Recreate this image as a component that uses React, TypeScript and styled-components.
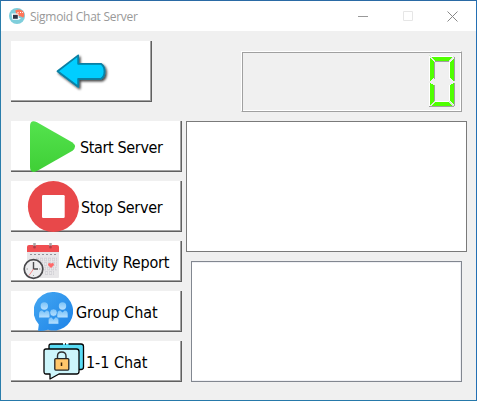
import React from "react";
import styled, { createGlobalStyle } from "styled-components";

const GlobalStyle = createGlobalStyle`
  * { box-sizing: border-box; }
  body { margin: 0; background: #f0f0f0; overflow: hidden; }
  svg { display: block; flex: none; }
`;

const Window = styled.main`
  width: 477px;
  height: 401px;
  border: 1px solid #1f6fae;
  border-color: #2a6aa5 #2470b4 #2679aa #2a7dab;
  background: #f0f0f0;
  display: flex;
  flex-direction: column;
`;

const TitleBar = styled.header`
  height: 30px;
  flex: none;
  background: #fff;
  display: flex;
  align-items: center;
  padding: 0 1px 0 8px;
`;

const Title = styled.h1`
  margin: 0 auto 0 5px;
  padding-top: 1px;
  font: 400 12px/16px "Open Sans", "Noto Sans", sans-serif;
  letter-spacing: -0.27px;
  color: #999;
  white-space: nowrap;
`;

const WindowControl = styled.button`
  width: 45px;
  height: 30px;
  padding: 0;
  border: 0;
  background: none;
  display: grid;
  place-items: center;
`;

const TopRow = styled.div`
  display: flex;
  padding: 10px 14px 0 10px;
  height: 90px;
  flex: none;
  justify-content: space-between;
`;

const RaisedButton = styled.button<{ $height: number; $inset?: number; $width?: number }>`
  width: ${(p) => p.$width ?? 171}px;
  height: ${(p) => p.$height}px;
  flex: none;
  border: 0;
  padding: 0 0 0 ${(p) => p.$inset ?? 0}px;
  background: #fff;
  box-shadow: inset -1px -1px #606060, inset -2px -2px #a3a3a3;
  display: flex;
  align-items: center;
`;

const Label = styled.span<{ $gap: number; $spacing: number }>`
  margin-left: ${(p) => p.$gap}px;
  padding-top: 2px;
  font: 400 16px/20px "DejaVu Sans Condensed", "DejaVu Sans", sans-serif;
  font-stretch: condensed;
  letter-spacing: ${(p) => p.$spacing}px;
  color: #000;
  white-space: nowrap;
`;

const Lcd = styled.div`
  width: 221px;
  height: 61px;
  margin-top: 10px;
  border: 1px solid;
  border-color: #fff #a0a0a0 #a0a0a0 #fff;
  box-shadow: inset 1px 1px #a0a0a0, inset -1px -1px #fff;
  display: flex;
  justify-content: flex-end;
  padding: 3px 6px 0 0;
`;

const Columns = styled.div`
  display: flex;
  gap: 4px;
  padding-left: 10px;
`;

const Actions = styled.nav`
  display: flex;
  flex-direction: column;
  gap: 9px;
`;

const Outputs = styled.section`
  display: flex;
  flex-direction: column;
  gap: 9px;
`;

const ClientList = styled.div`
  width: 281px;
  height: 131px;
  background: #fff;
  border: 1px solid #7a7a7a;
`;

const LogView = styled.div`
  width: 271px;
  height: 121px;
  margin-left: 5px;
  background: #fff;
  border: 1px solid #828790;
  box-shadow: inset -1px 1px #eff0f4, inset 0 -1px #eff0f4;
`;

const AppIcon = () => (
  <svg width="16" height="16" viewBox="0 0 16 16">
    <circle cx="8" cy="8" r="8" fill="#7fcedb" />
    <path d="M6.3 2.5Q11 0 14 3.2Q16.5 6 14.2 9.8Q12 7.8 9 8Q6.5 6 6.3 2.5Z" fill="#ff7659" />
    <path d="M8.5 4.5h1M11 4.5h1M13.2 4.5h.8" stroke="#fff" />
    <path d="M2.5 5.5h6.8l.5 4.5H12l-2 1.7H3.5Z" fill="#fff" />
    <path d="M4 6.8h4.8v4H4Z" fill="#303747" />
  </svg>
);

const ArrowIcon = () => (
  <svg width="58" height="44" viewBox="0 0 58 44">
    <defs>
      <filter id="arrow-shadow" x="-20%" y="-20%" width="150%" height="150%">
        <feDropShadow dx="1.5" dy="1.7" stdDeviation="1" floodColor="#000" floodOpacity=".75" />
      </filter>
    </defs>
    <path d="M4.5 21.2 25.2 5.4V13.8H48Q51.5 16 51.5 21.4T48 28.8H25.2V36.8Z" fill="#00ceff" stroke="#087fa3" strokeWidth="1.8" strokeLinejoin="round" filter="url(#arrow-shadow)" />
  </svg>
);

const PlayIcon = () => (
  <svg width="52" height="51" viewBox="0 0 52 51">
    <defs>
      <linearGradient id="play" x1="0" y1="0" x2="0" y2="1">
        <stop stopColor="#54e34e" />
        <stop offset="1" stopColor="#3fcf36" />
      </linearGradient>
    </defs>
    <path d="M3 5C3 0 6-.8 10 1.3L45.5 21.5Q50.5 25.5 45.5 29.8L10 50Q3 53 3 46Z" fill="url(#play)" />
  </svg>
);

const StopIcon = () => (
  <svg width="52" height="51" viewBox="0 0 52 51">
    <circle cx="26.4" cy="25.5" r="25.5" fill="#e8484a" />
    <rect x="15" y="14" width="22.7" height="23" rx="1.2" fill="#fff" />
  </svg>
);

const ReportIcon = () => (
  <svg width="38" height="37" viewBox="0 0 38 37">
    <rect x="4" y="4" width="32" height="31" rx="1" fill="#e7e6e8" />
    <path d="M4 9V4Q4 2 6 2H34Q36 2 36 4V9Z" fill="#f04f52" />
    <path d="M11.5 0V5M27.5 0V5" stroke="#aaa" strokeWidth="2.5" />
    <circle cx="11.5" cy="4" r="1.5" fill="#b83842" />
    <circle cx="27.5" cy="4" r="1.5" fill="#b83842" />
    <path d="M7 11.5H34" stroke="#92929a" strokeDasharray="2 2" />
    <path d="M13 16.5H34M13 21H34M20 25.5H34M22 30H31" stroke="#cdccd1" strokeWidth="3.4" strokeDasharray="3 1" />
    <path d="M13 16.5H34M13 21H34M20 25.5H34M22 30H31" stroke="#e9e8ea" strokeWidth="1.8" strokeDasharray="1.8 2.2" strokeDashoffset="-.6" />
    <path d="M28 25l-3-3Q25 19 28 20.5Q31 19 31 22Z" fill="#ff6869" />
    <circle cx="10.5" cy="26" r="9.3" fill="#ededef" stroke="#49494c" strokeWidth="1.7" />
    <path d="M10.5 19V26H15" fill="none" stroke="#4b4b4e" strokeWidth="1.4" />
    <path d="M10.5 26 6 32.5" stroke="#f78b8b" />
    <path d="M3.5 26H5M10.5 32V33M16 26H17.5" stroke="#999" />
  </svg>
);

const Person = () => (
  <>
    <circle cx="0" cy="-5.2" r="3.7" />
    <path d="M-5.2 6.3V2.8Q-5.2-.7-2.2-.7L0 1.4 2.2-.7Q5.2-.7 5.2 2.8V6.3Z" />
  </>
);

const GroupIcon = () => (
  <svg width="39" height="39" viewBox="0 0 39 39">
    <defs>
      <linearGradient id="bubble" x1="0" y1="0" x2="1" y2="1">
        <stop stopColor="#45a8f2" />
        <stop offset="1" stopColor="#1c82e7" />
      </linearGradient>
      <linearGradient id="people" x1="0" y1="0" x2="0" y2="1">
        <stop stopColor="#7cc3f8" />
        <stop offset="1" stopColor="#b7e0ff" />
      </linearGradient>
    </defs>
    <path d="M19.3 0A19.3 19.3 0 1 1 14 37.7Q9 39.2 4 38.8L4.8 32.5A19.3 19.3 0 0 1 19.3 0Z" fill="url(#bubble)" />
    <g fill="url(#people)">
      <g transform="translate(10.3 19.2)"><Person /></g>
      <g transform="translate(28.5 19.2)"><Person /></g>
      <g transform="translate(19.5 25.8)" stroke="#2f94ed" strokeWidth=".6"><Person /></g>
    </g>
  </svg>
);

const PrivateIcon = () => (
  <svg width="42" height="38" viewBox="0 0 42 38" strokeLinejoin="round">
    <path d="M6 6V3Q6 1 8 1H38Q40.5 1 40.5 3.5V24Q40.5 26.5 38 26.5H35V6Z" fill="#5bdcf5" />
    <path d="M6 6V3Q6 1 8 1H20M22 1H23M25.5 1H38Q40.5 1 40.5 3.5V24Q40.5 26.5 38 26.5H36" fill="none" stroke="#050505" strokeWidth="1.3" />
    <path d="M3 6H33.5Q36 6 36 8.5V28.5Q36 31 33.5 31H16L7 36V31H3Q1 31 1 28.5V8Q1 6 3 6Z" fill="#cdf6fc" stroke="#050505" strokeWidth="1.3" />
    <path d="M14.5 16V13Q14.5 9 18.7 9T23 13V16" fill="none" stroke="#303030" strokeWidth="1.4" />
    <rect x="11.8" y="15.6" width="14" height="11.5" rx="1" fill="#ffc76b" stroke="#252525" strokeWidth="1.3" />
    <path d="M18.5 19.5V23" stroke="#3b2508" strokeWidth="1.5" />
  </svg>
);

const ZeroDigit = () => (
  <svg width="26" height="54" viewBox="0 0 26 54" shapeRendering="crispEdges">
    <g fill="#50ff00">
      <path d="M2 2H24L20 6H6Z" />
      <path d="M1 3 5 7V23L1 26Z" />
      <path d="M25 3V26L21 23V7Z" />
      <path d="M1 28 5 30V46L1 50Z" />
      <path d="M21 30 25 28V50L21 46Z" />
      <path d="M6 47H20L24 51H2Z" />
    </g>
    <path d="M.5 51V28M.5 26V1.5H25M5 46.5H20M20.5 24V7M20.5 46V30" fill="none" stroke="#fff" />
    <path d="M.5.5 6 6M25 1 20 6M1 51.5 6 46.5M25 51.5 20 46.5" stroke="#d8e8d0" />
    <path d="M25.5 2V26M25.5 28V51M5.5 7V24M5.5 30V46M6 6.5H20M0 51.5H25" stroke="#a0a0a0" fill="none" />
  </svg>
);

const actions = [
  { label: "Start Server", icon: <PlayIcon />, height: 51, inset: 16, gap: 1, spacing: -0.36 },
  { label: "Stop Server", icon: <StopIcon />, height: 51, inset: 16, gap: 2, spacing: -0.28 },
  { label: "Activity Report", icon: <ReportIcon />, height: 41, inset: 12, gap: 5, spacing: -0.18 },
  { label: "Group Chat", icon: <GroupIcon />, height: 41, inset: 23, gap: 3, spacing: -0.04 },
  { label: "1-1 Chat", icon: <PrivateIcon />, height: 41, inset: 32, gap: 1, spacing: -0.05 },
];

export default function App() {
  return (
    <>
      <GlobalStyle />
      <Window>
        <TitleBar>
          <AppIcon />
          <Title>Sigmoid Chat Server</Title>
          <WindowControl aria-label="Minimize">
            <svg width="10" height="10"><path d="M0 5.5H10" stroke="#999" /></svg>
          </WindowControl>
          <WindowControl aria-label="Maximize">
            <svg width="10" height="10"><path d="M.5.5H9.5V9.5H.5Z" fill="none" stroke="#e6e6e6" /></svg>
          </WindowControl>
          <WindowControl aria-label="Close">
            <svg width="11" height="11"><path d="M.5.5 10.5 10.5M10.5.5.5 10.5" stroke="#888" /></svg>
          </WindowControl>
        </TitleBar>
        <TopRow>
          <RaisedButton $height={61} $width={141} $inset={42} aria-label="Back"><ArrowIcon /></RaisedButton>
          <Lcd role="img" aria-label="0"><ZeroDigit /></Lcd>
        </TopRow>
        <Columns>
          <Actions>
            {actions.map((a) => (
              <RaisedButton key={a.label} $height={a.height} $inset={a.inset}>
                {a.icon}
                <Label $gap={a.gap} $spacing={a.spacing}>{a.label}</Label>
              </RaisedButton>
            ))}
          </Actions>
          <Outputs>
            <ClientList />
            <LogView />
          </Outputs>
        </Columns>
      </Window>
    </>
  );
}
